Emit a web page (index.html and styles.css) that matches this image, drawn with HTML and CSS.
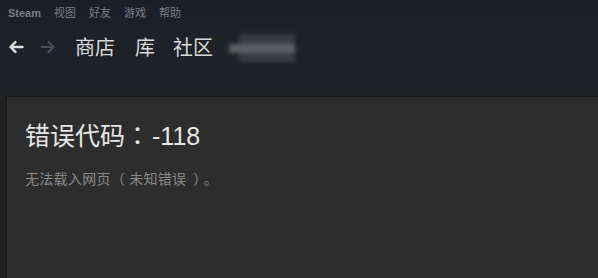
FILE: index.html
```html
<!DOCTYPE html>
<html lang="zh-CN">
<head>
<meta charset="utf-8">
<title>Steam</title>
<link rel="stylesheet" href="styles.css">
</head>
<body>
<div class="app">
  <div class="menubar">
    <span class="menu-item steam">Steam</span>
    <span class="menu-item">视图</span>
    <span class="menu-item">好友</span>
    <span class="menu-item">游戏</span>
    <span class="menu-item">帮助</span>
  </div>
  <div class="nav">
    <span class="arrow back">
      <svg width="16" height="16" viewBox="0 0 16 16"><path d="M14.5 8H2.5M7.5 3L2.5 8L7.5 13" fill="none" stroke="#e2e2e2" stroke-width="2.4" stroke-linecap="round" stroke-linejoin="round"/></svg>
    </span>
    <span class="arrow fwd">
      <svg width="16" height="16" viewBox="0 0 16 16"><path d="M1.5 8H13.5M8.5 3L13.5 8L8.5 13" fill="none" stroke="#4a4c50" stroke-width="2.2" stroke-linecap="round" stroke-linejoin="round"/></svg>
    </span>
    <span class="tab tab-store">商店</span>
    <span class="tab tab-lib">库</span>
    <span class="tab tab-comm">社区</span>
    <span class="username">
      <span class="blur-a"></span>
      <span class="blur-b"></span>
    </span>
  </div>
  <div class="content">
    <h1 class="title">错误代码<span class="punct" lang="ja">：</span><span class="code">-118</span></h1>
    <p class="desc">无法载入网页<span class="punct paren-open">（</span>未知错误<span class="punct paren-close">）</span><span class="punct">。</span></p>
  </div>
</div>
</body>
</html>
```

FILE: styles.css
```css
* { box-sizing: border-box; }
html, body { margin: 0; padding: 0; }
body {
  width: 598px;
  height: 278px;
  overflow: hidden;
  background: #202125;
  font-family: "Liberation Sans", "Noto Sans CJK SC", sans-serif;
}
.app {
  width: 598px;
  height: 278px;
  display: flex;
  flex-direction: column;
  background: linear-gradient(180deg, #1b1e28 0px, #1f2129 40px, #212226 96px, #212226 100%);
}
.menubar {
  height: 26px;
  display: flex;
  align-items: center;
  gap: 13px;
  padding-left: 8px;
}
.menu-item {
  font-size: 11px;
  line-height: 14px;
  color: #7b7e88;
}
.steam { font-weight: bold; color: #7a7d86; }
.nav {
  height: 70px;
  display: flex;
  align-items: flex-start;
  padding-top: 10px;
  padding-left: 8px;
}
.arrow {
  display: flex;
  align-items: center;
  height: 22px;
}
.back { width: 16px; }
.fwd { width: 16px; margin-left: 16px; }
.tab {
  font-family: "Noto Sans CJK SC", sans-serif;
  font-size: 20px;
  line-height: 22px;
  color: #d9d9d9;
}
.tab-store { margin-left: 19px; }
.tab-lib { margin-left: 20px; }
.tab-comm { margin-left: 18px; }
.username {
  position: relative;
  margin-left: 16px;
  margin-top: -3px;
  width: 66px;
  height: 30px;
  filter: blur(2px);
}
.blur-a {
  position: absolute;
  left: 10px;
  top: 1px;
  width: 56px;
  height: 28px;
  background: #3b3c42;
}
.blur-b {
  position: absolute;
  left: 0;
  top: 11px;
  width: 66px;
  height: 9px;
  background: #5e5f64;
}
.content {
  flex: 1;
  margin-left: 6px;
  background: #2d2d2d;
  border-top: 1px solid #17181a;
  border-left: 1px solid #1b1b1c;
  padding: 23px 18px;
}
.punct {
  font-family: "Noto Sans CJK JP", sans-serif;
}
.title {
  margin: 0;
  font-weight: normal;
  font-size: 25px;
  line-height: 28px;
  color: #e6e6e6;
}
.code { margin-left: 2px; }
.desc {
  margin: 19px 0 0;
  font-size: 14px;
  line-height: 18px;
  letter-spacing: 0.3px;
  color: #8a8a8a;
}
.paren-open { margin: 0 4px 0 0; }
.paren-close { margin: 0 3px 0 7px; }
```
